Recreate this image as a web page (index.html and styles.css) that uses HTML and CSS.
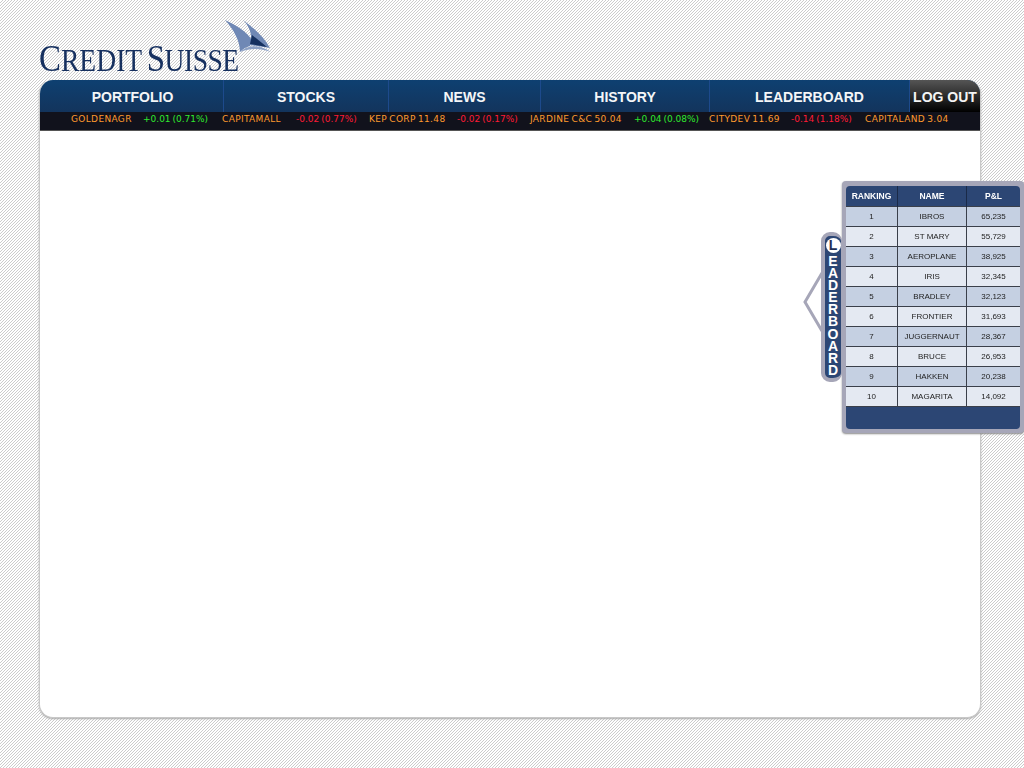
FILE: index.html
```html
<!DOCTYPE html>
<html>
<head>
    <title>Credit Suisse</title>
    <link rel="stylesheet" href="styles.css">
</head>
<body>
    <div class="page">
        <div class="logo">
            <span class="logo-text"><span class="logo-big">C</span>REDIT <span class="logo-word"><span class="logo-big">S</span>UISSE</span></span>
            <svg class="logo-sail" width="50" height="46" viewBox="0 0 50 46">
                <path d="M1 1 C12 6 22 12 28 21 L26 27 C22 28 19 30 16 33 C16 22 10 11 1 1 Z" fill="#6f88b5"/>
                <path d="M19 1 C30 9 40 18 46 29 L26 26 C29 17 26 8 19 1 Z" fill="#6f88b5"/>
                <path d="M28 16 L43 28 L26 25 Z" fill="#15305f"/>
                <path d="M16 33 C24 26 34 25 47 33 C36 29 26 29 16 33 Z" fill="#8ea2c6"/>
            </svg>
        </div>
        <div class="main">
            <div class="nav">
                <a class="nav-item portfolio">PORTFOLIO</a>
                <a class="nav-item stocks">STOCKS</a>
                <a class="nav-item news">NEWS</a>
                <a class="nav-item history">HISTORY</a>
                <a class="nav-item board">LEADERBOARD</a>
                <a class="logout">LOG OUT</a>
            </div>
            <div class="ticker">
                <span class="name">GOLDENAGR</span><span class="up">+0.01 (0.71%)</span>
                <span class="name">CAPITAMALL</span><span class="down">-0.02 (0.77%)</span>
                <span class="name">KEP CORP 11.48</span><span class="down">-0.02 (0.17%)</span>
                <span class="name">JARDINE C&amp;C 50.04</span><span class="up">+0.04 (0.08%)</span>
                <span class="name">CITYDEV 11.69</span><span class="down">-0.14 (1.18%)</span>
                <span class="name">CAPITALAND 3.04</span>
            </div>
        </div>
    </div>

    <div class="leaderboard">
        <div class="tab">
            <svg class="tab-arrow" width="20" height="62" viewBox="0 0 20 62">
                <path d="M19 2 L2 31 L19 60" fill="none" stroke="#a6a6b8" stroke-width="3"/>
            </svg>
            <div class="tab-inner">
                <span class="tab-first">L</span>
                <span class="tab-rest">EADERBOARD</span>
            </div>
        </div>
        <div class="board-panel">
            <table class="board-table">
                <thead>
                    <tr><th class="col-rank">RANKING</th><th class="col-name">NAME</th><th>P&amp;L</th></tr>
                </thead>
                <tbody>
                    <tr><td>1</td><td>IBROS</td><td>65,235</td></tr>
                    <tr><td>2</td><td>ST MARY</td><td>55,729</td></tr>
                    <tr><td>3</td><td>AEROPLANE</td><td>38,925</td></tr>
                    <tr><td>4</td><td>IRIS</td><td>32,345</td></tr>
                    <tr><td>5</td><td>BRADLEY</td><td>32,123</td></tr>
                    <tr><td>6</td><td>FRONTIER</td><td>31,693</td></tr>
                    <tr><td>7</td><td>JUGGERNAUT</td><td>28,367</td></tr>
                    <tr><td>8</td><td>BRUCE</td><td>26,953</td></tr>
                    <tr><td>9</td><td>HAKKEN</td><td>20,238</td></tr>
                    <tr><td>10</td><td>MAGARITA</td><td>14,092</td></tr>
                </tbody>
            </table>
            <div class="board-foot"></div>
        </div>
    </div>
</body>
</html>
```

FILE: styles.css
```css
html, body {
    margin: 0;
    height: 768px;
    overflow: hidden;
}
body {
    font-family: "Liberation Sans", Arial, sans-serif;
    background-color: #fff;
    background-image: url("data:image/svg+xml,%3Csvg xmlns='http://www.w3.org/2000/svg' width='3' height='3' shape-rendering='crispEdges'%3E%3Crect x='2' y='0' width='1' height='1' fill='%23cccccc'/%3E%3Crect x='1' y='1' width='1' height='1' fill='%23cccccc'/%3E%3Crect x='0' y='2' width='1' height='1' fill='%23cccccc'/%3E%3C/svg%3E");
    background-size: 3px 3px;
}
.page {
    width: 942px;
    margin-left: 39px;
}
.logo {
    height: 80px;
    position: relative;
}
.logo-text {
    position: absolute;
    left: 0;
    top: 39px;
    font-family: "Liberation Serif", serif;
    font-size: 31px;
    line-height: 40px;
    color: #16305f;
    white-space: nowrap;
    word-spacing: -2px;
    transform: scaleX(0.89);
    transform-origin: left center;
}
.logo-big {
    font-size: 37px;
}
.logo-word {
    letter-spacing: -0.6px;
}
.logo-sail {
    position: absolute;
    left: 185px;
    top: 19px;
}
.main {
    height: 637px;
    background: #fff;
    border: 1px solid #c8c8c8;
    border-top: none;
    border-radius: 14px;
    overflow: hidden;
    box-shadow: 0 1px 2px #aaa;
}
.nav {
    display: flex;
    height: 32px;
    background: linear-gradient(#0e4071, #13345c);
}
.nav-item {
    display: block;
    box-sizing: border-box;
    color: #f4f6f8;
    font-size: 14px;
    font-weight: bold;
    line-height: 35px;
    text-align: center;
    border-right: 1px solid #1d4a8c;
}
.portfolio { width: 184px; padding-left: 2px; }
.stocks { width: 165px; }
.news { width: 152px; }
.history { width: 169px; }
.board { width: 200px; }
.logout {
    flex: 1;
    color: #f4f4f4;
    font-size: 14px;
    font-weight: bold;
    line-height: 35px;
    text-align: center;
    background: linear-gradient(#555, #000);
}
.ticker {
    display: grid;
    grid-template-columns: 72px 79px 74px 73px 88px 73px 104px 75px 82px 74px auto;
    height: 18px;
    background: #11121c;
    border-bottom: 1px solid #555;
    font-family: "DejaVu Sans", sans-serif;
    font-size: 9px;
    line-height: 15px;
    padding-left: 31px;
    white-space: nowrap;
    word-spacing: -1px;
}
.name { color: #ff9a2e; letter-spacing: 0.35px; }
.up { color: #2fe82f; }
.down { color: #ff1a35; }

.leaderboard {
    position: absolute;
    left: 803px;
    top: 181px;
    display: flex;
    align-items: flex-start;
}
.tab {
    position: relative;
    width: 39px;
    height: 150px;
    margin-top: 51px;
}
.tab-arrow {
    position: absolute;
    left: 0;
    top: 39px;
}
.tab-inner {
    position: absolute;
    left: 18px;
    top: 0;
    box-sizing: border-box;
    width: 21px;
    height: 150px;
    padding-top: 2px;
    border: 4px solid #a6a6b8;
    border-right-width: 1px;
    border-radius: 9px;
    background: #2c4674;
    color: #fff;
    font-weight: bold;
    text-align: center;
    display: flex;
    flex-direction: column;
    align-items: center;
}
.tab-first {
    flex: none;
    width: 15px;
    height: 15px;
    border-radius: 50%;
    background: #fff;
    color: #1d2f55;
    font-size: 14px;
    line-height: 15px;
}
.tab-rest {
    width: 12px;
    margin-top: 2px;
    font-size: 14px;
    line-height: 12.1px;
    word-break: break-all;
}
.board-panel {
    box-sizing: border-box;
    width: 182px;
    height: 252px;
    padding: 5px 4px;
    background: #a6a6b8;
    border-radius: 4px;
    box-shadow: 0 1px 2px #888;
}
.board-table {
    width: 174px;
    border-collapse: collapse;
    table-layout: fixed;
    font-size: 8px;
    color: #222;
    text-align: center;
    filter: blur(0.3px);
    clip-path: inset(0 round 4px 4px 0 0);
}
.board-table th {
    height: 20px;
    padding: 0;
    background: #2c4674;
    color: #fff;
    font-size: 8.5px;
    border-right: 1px solid #1a2a48;
}
.board-table th:last-child { border-right: none; }
.col-rank { width: 51px; }
.col-name { width: 68px; }
.board-table td {
    height: 19px;
    padding: 0;
    border: 1px solid #3a3f4a;
}
.board-table td:first-child { border-left: none; }
.board-table td:last-child { border-right: none; }
.board-table tbody tr:nth-child(odd) td { background: #c5d0e2; }
.board-table tbody tr:nth-child(even) td { background: #e4e9f2; }
.board-foot {
    height: 22px;
    background: #2c4674;
    border-radius: 0 0 4px 4px;
}
```
